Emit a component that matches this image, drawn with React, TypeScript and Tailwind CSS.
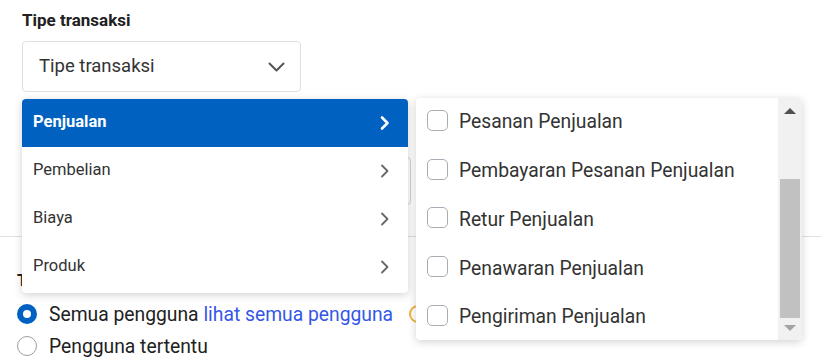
const categories = ["Penjualan", "Pembelian", "Biaya", "Produk"];

const salesTypes = [
  "Pesanan Penjualan",
  "Pembayaran Pesanan Penjualan",
  "Retur Penjualan",
  "Penawaran Penjualan",
  "Pengiriman Penjualan",
];

const ChevronRight = ({ active }: { active: boolean }) => (
  <svg width="10" height="16" viewBox="0 0 10 16" fill="none">
    <path
      d="M2 2.5 L7.5 8 L2 13.5"
      stroke={active ? "#ffffff" : "#666666"}
      strokeWidth={active ? 2.6 : 1.8}
      strokeLinecap="round"
      strokeLinejoin="round"
    />
  </svg>
);

export default function App() {
  return (
    <div className="relative w-[821px] h-[357px] overflow-hidden bg-white font-['Roboto',sans-serif] text-[#212121]">
      {/* background form */}
      <div className="pl-[22px] pt-[9px]">
        <p className="text-[17px] leading-[22px] font-bold">Tipe transaksi</p>
        <div className="mt-[10px] w-[279px] h-[51px] border border-[#e0e0e0] rounded flex items-center justify-between pl-[16px] pr-[15px]">
          <span className="text-[18.5px] text-[#333333]">Tipe transaksi</span>
          <svg width="17" height="10" viewBox="0 0 17 10" fill="none">
            <path
              d="M1.5 1.5 L8.5 8.5 L15.5 1.5"
              stroke="#555555"
              strokeWidth="2"
              strokeLinecap="round"
              strokeLinejoin="round"
            />
          </svg>
        </div>
        <div className="mt-[65px] w-[389px] h-[48px] border border-[#d4d4d4] rounded" />
      </div>
      <div className="mt-[31px] border-t border-[#e0e0e0]" />
      <div className="pl-[17px]">
        <p className="mt-[32px] text-[17px] leading-[22px] font-bold">Tampilkan untuk</p>
        <div className="mt-[7px] h-8 flex items-center">
          <span className="w-5 h-5 rounded-full border-[6px] border-[#0061c1] bg-white" />
          <span className="ml-3 pt-[2px] text-[19.3px] text-[#212121]">
            Semua pengguna <span className="text-[#3457e8]">lihat semua pengguna</span>
          </span>
          <span className="ml-[16px] w-[18px] h-[18px] rounded-full border-2 border-[#f0b040]" />
        </div>
        <div className="h-8 flex items-center">
          <span className="w-5 h-5 rounded-full border border-[#9e9e9e] bg-white" />
          <span className="ml-3 pt-[2px] text-[19.3px] text-[#212121]">Pengguna tertentu</span>
        </div>
      </div>

      {/* category menu */}
      <div className="absolute left-[22px] top-[99px] w-[386px] h-[194px] bg-white rounded shadow-[0_2px_8px_rgba(0,0,0,0.18)] overflow-hidden">
        {categories.map((c, i) => (
          <div
            key={c}
            className={`h-12 flex items-center justify-between pl-[11px] pr-[18px] text-[16.5px] ${
              i === 0 ? "bg-[#0061c1] text-white font-bold" : "text-[#333333]"
            }`}
          >
            <span className="pb-[2px]">{c}</span>
            <ChevronRight active={i === 0} />
          </div>
        ))}
      </div>

      {/* sub menu */}
      <div className="absolute left-[416px] top-[98px] w-[386px] h-[242px] bg-white rounded shadow-[0_2px_8px_rgba(0,0,0,0.18)] overflow-hidden flex">
        <div className="flex-1 -mt-[2px]">
          {salesTypes.map((t) => (
            <div key={t} className="h-[48.75px] flex items-center pl-[11px]">
              <span className="w-[21px] h-[21px] rounded-[5px] border border-[#a8adb3] bg-white" />
              <span className="ml-[11px] pt-[5px] text-[19.3px] text-[#333333]">{t}</span>
            </div>
          ))}
        </div>
        <div className="relative w-[24px] h-full bg-[#f1f1f1]">
          <div className="absolute left-[6px] top-[10px] w-0 h-0 border-l-[6px] border-r-[6px] border-b-[6px] border-l-transparent border-r-transparent border-b-[#505050]" />
          <div className="absolute left-[2px] right-[2px] top-[81px] h-[139px] bg-[#c1c1c1]" />
          <div className="absolute left-[6px] top-[227px] w-0 h-0 border-l-[6px] border-r-[6px] border-t-[6px] border-l-transparent border-r-transparent border-t-[#a3a3a3]" />
        </div>
      </div>
    </div>
  );
}
